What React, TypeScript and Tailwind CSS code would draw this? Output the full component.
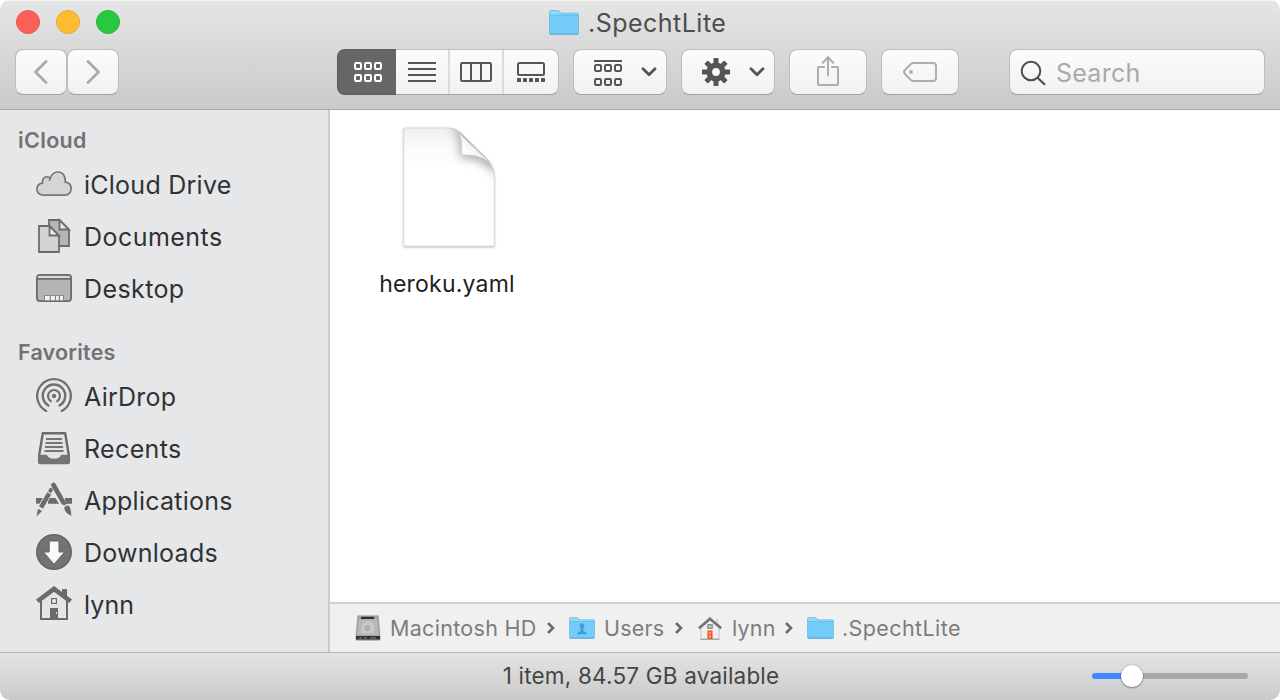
import React from "react";

type IconProps = { className?: string };

const SHADOW =
  "border border-[#bdbdbd] border-b-[#a2a2a2] bg-linear-to-b from-[#fcfcfc] to-[#f1f1f1] bg-clip-padding";

function Cells({ y, stroke }: { y: number; stroke: string }) {
  return (
    <g fill="none" stroke={stroke} strokeWidth="2">
      {[1, 11, 21].map((x) => (
        <rect key={x} x={x} y={y} width="6" height="6" rx="1.2" />
      ))}
    </g>
  );
}

function ChevronDown() {
  return (
    <svg width="16" height="10" viewBox="0 0 16 10" fill="none" stroke="#555" strokeWidth="2.8" strokeLinecap="round" strokeLinejoin="round">
      <path d="M2 1.800 8 7.800l6-6" />
    </svg>
  );
}

function Folder({ className, person }: IconProps & { person?: boolean }) {
  return (
    <svg className={className} viewBox="0 0 30 25" preserveAspectRatio="none">
      <path d="M.5 1.8C.5 1 1 .5 1.8.5h7c.9 0 1.200.3 1.800 1L12 3.200h16.300c.8 0 1.200.5 1.200 1.200V23c0 .8-.5 1.300-1.300 1.300H1.800C1 24.300.5 23.800.5 23z" fill="#74ccf8" stroke="#5fb3dd" strokeWidth=".7" />
      <path d="M1 2c0-.6.3-.9.9-.9h6.800c.6 0 .9.2 1.400.8L11.600 3.800h16.600c.5 0 .8.3.8.8H1z" fill="#8fdafb" />
      <path d="M1 5.200h28" stroke="#5dbbec" strokeWidth=".8" />
      <path d="M1 24h28" stroke="#55a6d0" strokeWidth=".9" />
      {person && (
        <path d="M15 7c1.700 0 2.700 1.200 2.700 3 0 1.500-.6 2.500-1.200 3.200v2.600c1.200 1 4 1.200 4.500 3.700H9c.5-2.500 3.300-2.700 4.500-3.700v-2.600c-.6-.7-1.200-1.700-1.200-3.200 0-1.800 1-3 2.700-3z" fill="#3b9fdd" />
      )}
    </svg>
  );
}

function CloudIcon() {
  return (
    <svg width="36" height="36" viewBox="0 0 36 36">
      <path d="M7.500 29.200C3.500 29.200.9 26.500.9 23.100c0-3.200 2.300-5.500 5.500-6-.3-3.900 1.600-6.300 4.600-6.300 1.400 0 2.500.5 3.300 1.300C15.600 8.300 18.300 6 21.900 6c4.700 0 7.900 3.900 7.400 10.200 3.700.5 5.800 3.200 5.800 6.500 0 3.700-2.700 6.500-6.600 6.500z" fill="#d5d5d6" stroke="#757577" strokeWidth="1.700" />
      <path d="M14.300 12.200c-.6 1-1 1.700-1.100 2.700" fill="none" stroke="#757577" strokeWidth="1.500" />
    </svg>
  );
}

function DocumentsIcon() {
  return (
    <svg width="36" height="36" viewBox="0 0 36 36" stroke="#6b6b6d" strokeWidth="1.800">
      <path d="M13 2h10.500L33 11.500V28H13z" fill="#b4b5b7" />
      <path d="M23.500 2v9.500H33z" fill="#e4e5e6" />
      <path d="M3 8h10.500L23 17.500V34H3z" fill="#d3d4d4" />
      <path d="M13.500 8v9.500H23z" fill="#e9eaeb" />
    </svg>
  );
}

function DesktopIcon() {
  return (
    <svg width="36" height="36" viewBox="0 0 36 36">
      <rect x=".9" y="4.900" width="34.200" height="26.200" rx="2.800" fill="#b3b4b6" stroke="#6b6b6d" strokeWidth="1.800" />
      <path d="M2 6.300h32V8H2z" fill="#dedfe0" />
      <path d="M1 8.900h34" stroke="#6b6b6d" strokeWidth="1.600" />
      <path d="M8 25.200h20v5H8z" fill="#858587" />
      <path d="M9 26h4.700v4.200H9zM14.900 26h4v4.200h-4zM20 26h2.800v4.200H20zM24 26h3v4.200h-3z" fill="#f0f1f2" />
    </svg>
  );
}

function AirDropIcon() {
  return (
    <svg width="36" height="36" viewBox="0 0 36 36" fill="none" stroke="#6f6f71" strokeWidth="2.200" strokeLinecap="round">
      <circle cx="18" cy="18" r="2.200" fill="#6f6f71" stroke="none" />
      <path d="M14.800 23.100a6 6 0 1 1 6.400 0" />
      <path d="M12.500 27.500a11.200 11.200 0 1 1 11 0" strokeWidth="2.400" />
      <path d="M10.200 32.900a16.800 16.800 0 1 1 15.600 0" strokeWidth="2.300" />
    </svg>
  );
}

function RecentsIcon() {
  return (
    <svg width="36" height="36" viewBox="0 0 36 36">
      <path d="M6.800 3.200h22.400L32.800 25v7.200c0 .6-.3.900-.9.900H4.100c-.6 0-.9-.3-.9-.9V25z" fill="#e3e4e5" stroke="#6b6b6d" strokeWidth="2.400" strokeLinejoin="round" />
      <path d="M2.200 24.700h8.600c1 2.800 3.400 4 7.200 4s6.200-1.200 7.200-4h8.600l-.8 9.200H3z" fill="#747476" />
      <path d="M10 9h16M9.500 13h17M9 17h18M8.500 21h19" stroke="#757577" strokeWidth="1.900" />
    </svg>
  );
}

function ApplicationsIcon() {
  return (
    <svg width="36" height="36" viewBox="0 0 36 36" fill="none" stroke="#6b6b6d">
      <path d="M0 18.800h7M12 18.800h11M29 18.800h7" strokeWidth="5.800" />
      <path d="M16 3.500 27.500 22.500" stroke="#e6e7e9" strokeWidth="7" />
      <path d="M17.500 3 27.300 20.300" strokeWidth="4.600" strokeLinecap="round" />
      <path d="M27.400 22.500 31 20.700" strokeWidth="2" />
      <path d="M28.300 25.600c.7-1.600 3-2.700 4.400-1.900 2.200 1.900 2.200 5.800 2.700 10.200-3.300-1.500-6.900-4.100-7.100-8.300z" fill="#6b6b6d" stroke="none" />
      <path d="M14.600 8.300 4.200 27" stroke="#e6e7e9" strokeWidth="6.300" />
      <path d="M14.900 7.900 14.400 8.800" strokeWidth="4" strokeLinecap="round" />
      <path d="M13.200 11.300 5 25.500" strokeWidth="4.500" />
      <path d="m2 26.700 4.100 2.400L.5 34.400z" fill="#6b6b6d" stroke="none" />
    </svg>
  );
}

function DownloadsIcon() {
  return (
    <svg width="36" height="36" viewBox="0 0 36 36">
      <circle cx="18" cy="18" r="17.200" fill="#737375" stroke="#666668" strokeWidth="1.600" />
      <path d="M13.200 7h9.800v11h5.600L18 30.300 7.500 18h5.700z" fill="#fafafa" stroke="#636365" strokeWidth="1" />
    </svg>
  );
}

function HomeIcon() {
  return (
    <svg width="36" height="36" viewBox="0 0 36 36">
      <path d="M5 14v19h26V14L18 4z" fill="#e4e5e6" stroke="#6b6b6d" strokeWidth="2" />
      <path d="M26 3h5v8.500l-5-3z" fill="#6b6b6d" />
      <path d="M18 0 36 13.500 33.200 17 18 5.800 2.800 17 0 13.500z" fill="#6b6b6d" />
      <rect x="15.600" y="12.600" width="4.800" height="4.800" fill="#eee" stroke="#6b6b6d" strokeWidth="1.200" />
      <path d="M14 22h8v11h-8z" fill="#6b6b6d" />
      <path d="M20.500 26v2" stroke="#ddd" strokeWidth="1" />
    </svg>
  );
}

function GearIcon() {
  return (
    <svg width="28" height="28" viewBox="-14 -14 28 28" fill="#555">
      {[0, 45, 90, 135].map((a) => (
        <rect key={a} x="-2.500" y="-14" width="5" height="28" rx=".8" transform={`rotate(${a})`} />
      ))}
      <circle r="9.600" />
      <circle r="3.900" fill="#f7f7f7" />
    </svg>
  );
}

function DiskIcon() {
  return (
    <svg width="26" height="26" viewBox="0 0 26 26">
      <path d="M2.800.8h20.400L25 20.500v3.800c0 .6-.4 1-1 1H2c-.6 0-1-.4-1-1v-3.800z" fill="#a6a6a6" stroke="#8f8f8f" strokeWidth=".6" />
      <path d="M4 4.500h18L23.500 20h-21z" fill="#b8b8b8" />
      <path d="M6 1.800h13v2.200H6z" fill="#303030" />
      <path d="M6.500 18.500C5 11 9 5.500 14 6c5 .5 7 6 4.500 12.500z" fill="#c6c6c6" />
      <circle cx="12.500" cy="13" r="4" fill="#b0b0b0" stroke="#dadada" strokeWidth=".8" />
      <path d="M1 21h24v3.500H1z" fill="#303030" />
      <path d="M4 23h3M9 23h3M15 23h6" stroke="#8a8a8a" strokeWidth="1" />
      <path d="M4.500 7.500h1.500M20 8h1.300" stroke="#77c9f1" strokeWidth="1.200" />
    </svg>
  );
}

function ColorHomeIcon() {
  return (
    <svg width="24" height="24" viewBox="0 0 24 24">
      <path d="M3 11.500 12 4l9 7.500V23H3z" fill="#efefef" stroke="#c4c4c4" strokeWidth="1" />
      <path d="M18 3h2.500v5L18 6z" fill="#d5d5d5" />
      <path d="M.8 12.300 12 2.800l11.200 9.500" fill="none" stroke="#747474" strokeWidth="2.800" />
      <rect x="9.800" y="8.700" width="4.400" height="3.600" fill="#bfc9cf" stroke="#777" strokeWidth="1" />
      <rect x="9.500" y="14.500" width="5" height="8.500" fill="#f04b35" />
      <path d="M11.300 16h1.200v2h-1.200zM11.300 19.500h1.200v2.200h-1.200z" fill="#ffd84a" stroke="#ffb52e" strokeWidth=".7" />
      <path d="M2.500 23.300h19" stroke="#999" strokeWidth="1" />
    </svg>
  );
}

function FileIcon() {
  return (
    <svg width="100" height="126" viewBox="0 0 100 126" className="ml-[3px] overflow-visible">
      <defs>
        <linearGradient id="sheet" x1="0" y1="0" x2="0" y2="1">
          <stop offset="0" stopColor="#f0f0f0" />
          <stop offset=".18" stopColor="#fbfbfb" />
          <stop offset=".35" stopColor="#fff" />
        </linearGradient>
        <linearGradient id="curl" x1="0" y1="1" x2=".6" y2=".4">
          <stop offset="0" stopColor="#f1f1f1" />
          <stop offset=".5" stopColor="#fff" />
          <stop offset="1" stopColor="#ececec" />
        </linearGradient>
        <filter id="soft" x="-50%" y="-50%" width="200%" height="200%">
          <feGaussianBlur stdDeviation="5" />
        </filter>
        <filter id="drop" x="-10%" y="-10%" width="120%" height="120%">
          <feDropShadow dx="0" dy=".8" stdDeviation=".9" floodOpacity=".35" />
        </filter>
        <clipPath id="page">
          <path d="M4.800 4H49c6 0 9 1.500 12.500 4.800L86 33c6 6 9.200 12 9.200 21v68H4.800z" />
        </clipPath>
      </defs>
      <path d="M4.800 4H49c6 0 9 1.500 12.500 4.800L86 33c6 6 9.200 12 9.200 21v68H4.800z" fill="url(#sheet)" stroke="#cfcfcf" strokeWidth=".6" filter="url(#drop)" />
      <g clipPath="url(#page)">
        <path d="M46 2c13 0 14 12 15 32 14 0 30 6 38 21V2z" fill="#888" opacity=".65" filter="url(#soft)" />
      </g>
      <path d="M57 6.500c5.500 4 6.200 10 6 24.500 10-1 18 1 26 6z" fill="url(#curl)" stroke="#dadada" strokeWidth=".5" />
    </svg>
  );
}

const icloud = [
  { label: "iCloud Drive", icon: <CloudIcon />, track: "tracking-[0.25px]" },
  { label: "Documents", icon: <DocumentsIcon />, track: "tracking-[0.45px]" },
  { label: "Desktop", icon: <DesktopIcon />, track: "tracking-[0.4px]" },
];

const favorites = [
  { label: "AirDrop", icon: <AirDropIcon />, track: "tracking-[0.25px]" },
  { label: "Recents", icon: <RecentsIcon />, track: "tracking-[0.35px]" },
  { label: "Applications", icon: <ApplicationsIcon />, track: "tracking-[0.25px]" },
  { label: "Downloads", icon: <DownloadsIcon />, track: "tracking-[0.25px]" },
  { label: "lynn", icon: <HomeIcon />, track: "tracking-[0.1px]" },
];

function SidebarGroup({ items }: { items: typeof icloud }) {
  return (
    <ul>
      {items.map((item) => (
        <li key={item.label} className="flex h-[52px] items-center pl-9">
          {item.icon}
          <span className={`ml-[12px] pt-[2px] text-[25px] leading-[30px] text-[#303234] ${item.track}`}>{item.label}</span>
        </li>
      ))}
    </ul>
  );
}

function PathChevron() {
  return (
    <svg width="8" height="12" viewBox="0 0 8 12" fill="none" stroke="#6b6b6b" strokeWidth="2.600" className="shrink-0">
      <path d="m1 1 5 5-5 5" />
    </svg>
  );
}

function Toolbar() {
  return (
    <div className="flex h-[46px] pl-[15px]">
      <button className={`flex w-[52px] items-center justify-center rounded-[8px] ${SHADOW}`}>
        <svg width="14" height="24" viewBox="0 0 14 24" fill="none" stroke="#aaa" strokeWidth="2.800" strokeLinecap="round" strokeLinejoin="round">
          <path d="M12 1.500 1.500 12 12 22.500" />
        </svg>
      </button>
      <button className={`flex w-[52px] items-center justify-center rounded-[8px] ${SHADOW}`}>
        <svg width="14" height="24" viewBox="0 0 14 24" fill="none" stroke="#aaa" strokeWidth="2.800" strokeLinecap="round" strokeLinejoin="round">
          <path d="M2 1.500 12.500 12 2 22.500" />
        </svg>
      </button>

      <div className={`ml-[218px] flex w-[222px] rounded-[8px] ${SHADOW}`}>
        <button className="-my-px -ml-px flex w-[59px] items-center justify-center rounded-l-[8px] border border-r-0 border-[#5c5c5c] bg-[#666] pl-[2px]">
          <svg width="28" height="20" viewBox="0 0 28 20">
            <Cells y={1} stroke="#fff" />
            <Cells y={13} stroke="#fff" />
          </svg>
        </button>
        <button className="flex w-[54px] items-center justify-center border-r-2 border-[#dcdcdc]">
          <svg width="28" height="20" viewBox="0 0 28 20" fill="#555">
            <path d="M0 0h28v2H0zM0 6h28v2H0zM0 12h28v2H0zM0 18h28v2H0z" />
          </svg>
        </button>
        <button className="flex w-[54px] items-center justify-center border-r-2 border-[#dcdcdc]">
          <svg width="32" height="20" viewBox="0 0 32 20" fill="none" stroke="#555" strokeWidth="2">
            <rect x="1" y="1" width="30" height="18" rx="1.500" />
            <path d="M11 1v18M21 1v18" />
          </svg>
        </button>
        <button className="flex w-[54px] items-center justify-center">
          <svg width="28" height="20" viewBox="0 0 28 20" fill="#555">
            <rect x="1" y="1" width="26" height="12" rx="1.500" fill="none" stroke="#555" strokeWidth="2" />
            {[0, 6, 12, 18, 24].map((x) => (
              <rect key={x} x={x} y="16" width="4" height="4" rx=".6" />
            ))}
          </svg>
        </button>
      </div>

      <button className={`ml-[14px] flex w-[94px] items-center rounded-[8px] pl-[20px] ${SHADOW}`}>
        <svg width="28" height="26" viewBox="0 0 28 26" className="mt-[2px]">
          <path d="M0 0h28v2H0z" fill="#555" />
          <Cells y={5} stroke="#555" />
          <Cells y={19} stroke="#555" />
        </svg>
        <span className="ml-[19px]"><ChevronDown /></span>
      </button>

      <button className={`ml-[14px] flex w-[94px] items-center rounded-[8px] pl-[20px] ${SHADOW}`}>
        <GearIcon />
        <span className="ml-[19px]"><ChevronDown /></span>
      </button>

      <button className={`ml-[14px] flex w-[78px] items-center justify-center rounded-[8px] ${SHADOW}`}>
        <svg width="22" height="32" viewBox="0 0 22 32" fill="none" stroke="#adadad" strokeWidth="2" strokeLinecap="round" className="-mt-[2px]">
          <path d="M7 12H2.200c-.8 0-1.200.4-1.200 1.200v15.600c0 .8.4 1.200 1.200 1.200h17.600c.8 0 1.200-.4 1.200-1.200V13.200c0-.8-.4-1.200-1.200-1.200H15" />
          <path d="M11 20.500V2.500M5.800 7.700 11 2.300l5.200 5.400" />
        </svg>
      </button>

      <button className={`ml-[14px] flex w-[78px] items-center justify-center rounded-[8px] ${SHADOW}`}>
        <svg width="34" height="20" viewBox="0 0 34 20" fill="none" stroke="#adadad" strokeWidth="2">
          <path d="M10.500 1H30c1.800 0 3 1.200 3 3v12c0 1.800-1.200 3-3 3H10.500c-1.200 0-2-.3-2.800-1.100l-5.900-6.200c-1-1-1-2.400 0-3.400l5.900-6.200C8.500 1.300 9.300 1 10.500 1z" />
          <circle cx="8" cy="10" r="2" fill="#adadad" stroke="none" />
        </svg>
      </button>

      <div className={`ml-[50px] flex w-[256px] items-center rounded-[8px] pl-[10px] ${SHADOW}`}>
        <svg width="27" height="27" viewBox="0 0 27 27" fill="none" stroke="#4c4c4c" strokeWidth="2">
          <circle cx="11" cy="12" r="9.300" />
          <path d="M17.500 18.700 25 25.700" strokeWidth="2.200" />
        </svg>
        <span className="ml-[9px] pt-px text-[25px] leading-[30px] tracking-[0.25px] text-[#aaa]">Search</span>
      </div>
    </div>
  );
}

export default function App() {
  return (
    <div className="h-[700px] w-[1280px] bg-white">
      <div className="flex h-full flex-col overflow-hidden rounded-[10px] font-['Inter','Liberation_Sans',sans-serif]">
        <header className="h-[110px] shrink-0 border-t border-b border-t-[#f4f4f4] border-b-[#a9a9a9] bg-linear-to-b from-[#e5e5e5] to-[#cacaca]">
          <div className="flex h-[48px]">
            <div className="flex w-[549px] gap-4 pt-[9px] pl-4">
              <span className="size-6 rounded-full border border-[#e9574e] bg-[#fc6057]" />
              <span className="size-6 rounded-full border border-[#e5ac32] bg-[#fcbc30]" />
              <span className="size-6 rounded-full border border-[#27b63a] bg-[#28c940]" />
            </div>
            <Folder className="mt-[9px] h-[25px] w-[30px]" />
            <h1 className="ml-[9px] pt-[7px] text-[25px] leading-[30px] tracking-[0.48px] text-[#4d4d4d]">.SpechtLite</h1>
          </div>
          <Toolbar />
        </header>

        <div className="flex h-[542px] shrink-0">
          <aside className="w-[330px] shrink-0 border-r-2 border-[#cbcccd] bg-[#e6e7e9]">
            <h2 className="h-[48px] pt-[16px] pl-[18px] text-[21.500px] leading-[28px] font-semibold tracking-[0.35px] text-[#727274]">iCloud</h2>
            <SidebarGroup items={icloud} />
            <h2 className="h-[56px] pt-[24px] pl-[18px] text-[21.500px] leading-[28px] font-semibold tracking-[0.2px] text-[#727274]">Favorites</h2>
            <SidebarGroup items={favorites} />
          </aside>

          <main className="flex flex-1 flex-col bg-white">
            <div className="flex-1 pt-[14px] pl-[37px]">
              <div className="flex w-[160px] flex-col items-center">
                <FileIcon />
                <span className="mt-[20px] text-[23px] leading-[28px] tracking-[0.2px] text-[#1f1f1f]">heroku.yaml</span>
              </div>
            </div>
            <nav className="flex h-[50px] shrink-0 items-center border-t-2 border-[#d0d0d0] bg-[#f0f0f0] pb-px pl-[25px] text-[21.500px] leading-[28px] text-[#7c7c7c]">
              <DiskIcon />
              <span className="ml-[9px] w-[157px] whitespace-nowrap tracking-[0.3px]">Macintosh HD</span>
              <PathChevron />
              <Folder person className="ml-[14px] h-[22px] w-[26px]" />
              <span className="ml-[9px] w-[71px] whitespace-nowrap tracking-[0.2px]">Users</span>
              <PathChevron />
              <span className="ml-[15px]"><ColorHomeIcon /></span>
              <span className="ml-[10px] w-[53px] whitespace-nowrap tracking-[0.2px]">lynn</span>
              <PathChevron />
              <Folder className="ml-[14px] h-[22px] w-[27px]" />
              <span className="ml-[8px] whitespace-nowrap tracking-[0.4px]">.SpechtLite</span>
            </nav>
          </main>
        </div>

        <footer className="flex h-[48px] shrink-0 items-center border-t border-[#b5b5b5] bg-linear-to-b from-[#e4e4e4] to-[#cacaca] pb-[2px]">
          <div className="w-[1092px] pl-[190px] text-center text-[22.500px] leading-[28px] tracking-[0.2px] text-[#454545]">1 item, 84.57 GB available</div>
          <div className="flex items-center">
            <span className="h-[6px] w-[30px] rounded-l-full bg-[#3d89fd]" />
            <span className="z-10 -mx-px size-[22px] rounded-full bg-white shadow-[0_0_1px_rgba(0,0,0,0.5),0_1px_2px_rgba(0,0,0,0.35)]" />
            <span className="h-[6px] w-[106px] rounded-r-full bg-[#a8a8a8]" />
          </div>
        </footer>
      </div>
    </div>
  );
}
